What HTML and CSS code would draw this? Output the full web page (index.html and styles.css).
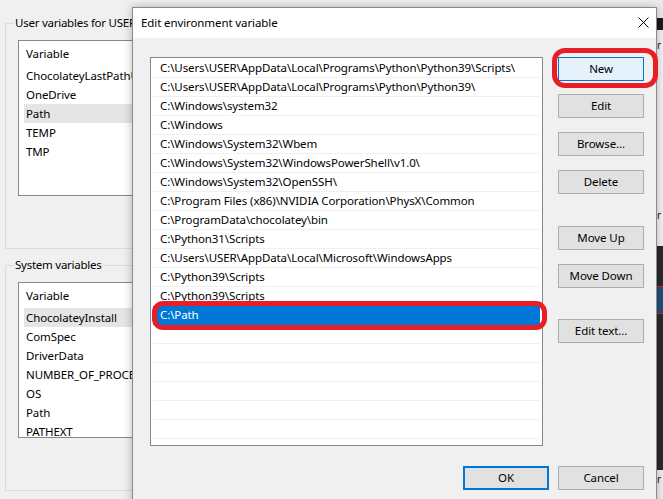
FILE: index.html
```html
<!DOCTYPE html>
<html lang="en">
<head>
    <meta charset="UTF-8">
    <meta name="viewport" content="width=device-width, initial-scale=1.0">
    <title>Edit environment variable</title>
    <link rel="stylesheet" href="styles.css">
</head>
<body>
    <!-- jendela Environment Variables di belakang -->
    <div class="env-window">
        <div class="group">
            <span class="group-label">User variables for USER</span>
            <div class="varlist">
                <div class="varlist-head">Variable</div>
                <div class="var-row">ChocolateyLastPathUpdate</div>
                <div class="var-row">OneDrive</div>
                <div class="var-row is-current">Path</div>
                <div class="var-row">TEMP</div>
                <div class="var-row">TMP</div>
            </div>
        </div>
        <div class="group">
            <span class="group-label">System variables</span>
            <div class="varlist">
                <div class="varlist-head">Variable</div>
                <div class="var-row is-current">ChocolateyInstall</div>
                <div class="var-row">ComSpec</div>
                <div class="var-row">DriverData</div>
                <div class="var-row">NUMBER_OF_PROCESSORS</div>
                <div class="var-row">OS</div>
                <div class="var-row">Path</div>
                <div class="var-row">PATHEXT</div>
            </div>
        </div>
    </div>

    <div class="edge-strip">
        <div class="edge-top"></div>
        <div class="edge-bar"></div>
        <div class="edge-panel"><span class="edge-char">r</span><span class="edge-char low">r</span></div>
        <div class="edge-dark"><div class="edge-sel"></div></div>
        <div class="edge-foot"><span class="edge-char">r</span></div>
    </div>

    <div class="dialog">
        <div class="dialog-title">
            <span>Edit environment variable</span>
            <svg class="close-icon" width="11" height="11" viewBox="0 0 11 11">
                <path d="M0.5 0.5 L10.5 10.5 M10.5 0.5 L0.5 10.5" stroke="#000" stroke-width="1" fill="none"/>
            </svg>
        </div>
        <div class="dialog-body">
            <div class="dialog-main">
                <div class="path-list" id="pathList"></div>
                <div class="side-buttons">
                    <button class="btn btn-default">New</button>
                    <button class="btn">Edit</button>
                    <button class="btn nudge">Browse...</button>
                    <button class="btn nudge">Delete</button>
                    <button class="btn gap-up">Move Up</button>
                    <button class="btn nudge">Move Down</button>
                    <button class="btn gap-text">Edit text...</button>
                </div>
            </div>
            <div class="dialog-footer">
                <button class="btn btn-ok">OK</button>
                <button class="btn">Cancel</button>
            </div>
        </div>
    </div>

    <script>
        // isi daftar path
        const paths = [
            "C:\\Users\\USER\\AppData\\Local\\Programs\\Python\\Python39\\Scripts\\",
            "C:\\Users\\USER\\AppData\\Local\\Programs\\Python\\Python39\\",
            "C:\\Windows\\system32",
            "C:\\Windows",
            "C:\\Windows\\System32\\Wbem",
            "C:\\Windows\\System32\\WindowsPowerShell\\v1.0\\",
            "C:\\Windows\\System32\\OpenSSH\\",
            "C:\\Program Files (x86)\\NVIDIA Corporation\\PhysX\\Common",
            "C:\\ProgramData\\chocolatey\\bin",
            "C:\\Python31\\Scripts",
            "C:\\Users\\USER\\AppData\\Local\\Microsoft\\WindowsApps",
            "C:\\Python39\\Scripts",
            "C:\\Python39\\Scripts",
            "C:\\Path"
        ];

        const list = document.getElementById('pathList');
        for (let i = 0; i < 20; i++) {
            const row = document.createElement('div');
            row.className = 'path-row';
            row.textContent = paths[i] || '';
            if (i === 13) row.classList.add('is-selected');
            list.appendChild(row);
        }
    </script>
</body>
</html>
```

FILE: styles.css
```css
* { box-sizing: border-box; }
body { margin: 0; width: 663px; height: 499px; overflow: hidden; position: relative; background-color: #f0f0f0; color: #000; font-family: "Noto Sans", "Segoe UI", sans-serif; font-size: 11.5px; letter-spacing: -0.1px; }

/* jendela belakang */
.env-window { width: 657px; padding: 23px 0 0 5px; }
.group { position: relative; width: 640px; height: 226px; border: 1px solid #dcdcdc; padding: 16px 0 0 12px; }
.group + .group { margin-top: 16px; }
.group-label { position: absolute; top: -9px; left: 8px; line-height: 16px; padding: 0 1px; background-color: #f0f0f0; white-space: nowrap; letter-spacing: -0.25px; }

.varlist { width: 600px; height: 156px; border: 1px solid #828790; background-color: #fff; padding: 0 5px; overflow: hidden; }
.varlist-head { height: 25px; line-height: 25px; padding-left: 2px; }
.var-row { height: 19px; line-height: 19px; padding-left: 2px; white-space: nowrap; }
.var-row.is-current { background-color: #e5e5e5; }

/* potongan jendela lain di kanan */
.edge-strip { position: absolute; left: 657px; top: 0; width: 6px; height: 499px; display: flex; flex-direction: column; overflow: hidden; }
.edge-top { height: 18px; background-color: #ececec; }
.edge-bar { height: 12px; background-color: #1b1b1b; }
.edge-panel { height: 216px; background-color: #f4f4f4; }
.edge-dark { height: 224px; background-color: #2a2a2a; padding-top: 40px; }
.edge-sel { height: 28px; background-color: #1f4f78; border-top: 1px solid #d22; border-bottom: 1px solid #d22; }
.edge-foot { flex: 1; background-color: #f0f0f0; }
.edge-char { display: block; width: 6px; line-height: 14px; font-size: 10px; color: #222; }
.edge-panel .edge-char { margin-top: 8px; }
.edge-panel .edge-char.low { margin-top: 156px; }
.edge-foot .edge-char { margin-top: 2px; }

/* dialog */
.dialog { position: absolute; left: 132px; top: 7px; width: 525px; height: 510px; border: 1px solid #8a8a8a; background-color: #f0f0f0; box-shadow: 0 0 9px rgba(0,0,0,0.28); }
.dialog-title { height: 30px; background-color: #fff; display: flex; align-items: center; justify-content: space-between; padding: 0 7px 1px 8px; }
.close-icon { display: block; }
.dialog-body { padding: 19px 12px 0 17px; }
.dialog-main { display: flex; gap: 15px; }

.path-list { width: 393px; height: 389px; border: 1px solid #828790; background-color: #fff; padding: 1px 2px 0; }
.path-row { position: relative; height: 19px; line-height: 18px; padding-left: 7px; border-bottom: 1px solid #f0f0f0; white-space: nowrap; }
.path-row.is-selected { background-color: #0078d7; color: #fff; border-bottom-color: #0078d7; }
.path-row.is-selected::after { content: ""; position: absolute; left: -1px; right: -7px; top: -5px; bottom: -6px; border: 5px solid #e81d25; border-radius: 11px; }

.side-buttons { width: 86px; display: flex; flex-direction: column; gap: 13px; }
.btn { width: 86px; height: 24px; padding: 0 0 1px; border: 1px solid #adadad; background-color: #e1e1e1; color: #000; font-family: inherit; font-size: 11.5px; letter-spacing: -0.1px; }
.btn-default { position: relative; background-color: #e5f1fb; border-color: #0078d7; }
.btn-default::after { content: ""; position: absolute; left: -7px; right: -15px; top: -10px; bottom: -8px; border: 5px solid #e81d25; border-radius: 13px; }
.nudge { margin-top: 1px; }
.gap-up { margin-top: 19px; }
.gap-text { margin-top: 18px; }

.dialog-footer { display: flex; justify-content: flex-end; gap: 9px; margin-top: 20px; }
.btn-ok { border: 2px solid #0078d7; }
```
